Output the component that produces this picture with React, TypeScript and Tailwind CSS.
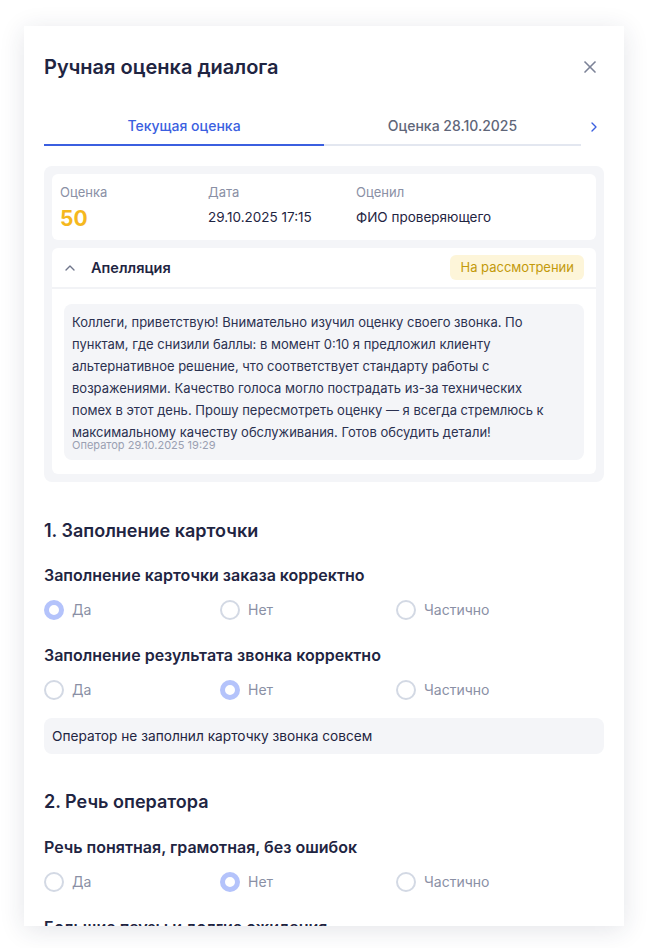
import { X, ChevronRight, ChevronUp } from "lucide-react";

type Opt = "Да" | "Нет" | "Частично";
const OPTS: Opt[] = ["Да", "Нет", "Частично"];

function Radio({ checked, label }: { checked: boolean; label: string }) {
  return (
    <label className="flex items-center gap-2 w-[176px]">
      <span
        className={
          checked
            ? "h-5 w-5 rounded-full border-[5px] border-[#b4c3fb] bg-white"
            : "h-5 w-5 rounded-full border-2 border-[#d3d9e4] bg-white"
        }
      />
      <span className="text-[14px] text-[#8a90a5]">{label}</span>
    </label>
  );
}

function Question({ title, value }: { title: string; value: Opt }) {
  return (
    <div>
      <p className="text-[16px] font-semibold text-[#1f2542] leading-5">{title}</p>
      <div className="flex mt-[14px]">
        {OPTS.map((o) => (
          <Radio key={o} checked={o === value} label={o} />
        ))}
      </div>
    </div>
  );
}

export default function App() {
  return (
    <div className="min-h-screen bg-white pt-[26px] px-6 font-['Inter',sans-serif]">
      <div className="h-[900px] overflow-hidden bg-white shadow-[0_4px_24px_rgba(30,40,70,0.12)] px-5">
        {/* Header */}
        <div className="flex items-center justify-between pt-[29px]">
          <h1 className="text-[20px] font-semibold text-[#1f2542] leading-6">Ручная оценка диалога</h1>
          <button className="text-[#7c8297] mr-1">
            <X className="h-5 w-5" strokeWidth={2} />
          </button>
        </div>

        {/* Tabs */}
        <div className="flex items-center mt-[36px]">
          <div className="flex flex-1">
            <div className="w-[280px] text-center text-[14px] font-medium text-[#3b5fe0] pb-[8px] border-b-2 border-[#3b5fe0]">
              Текущая оценка
            </div>
            <div className="flex-1 text-center text-[14px] font-medium text-[#5f6679] pb-[8px] border-b-2 border-[#e3e7f0]">
              Оценка 28.10.2025
            </div>
          </div>
          <ChevronRight className="h-4 w-4 text-[#3b5fe0] ml-[5px] mb-[8px] mr-[2px]" strokeWidth={2} />
        </div>

        {/* Summary */}
        <div className="mt-5 rounded-lg bg-[#f4f5f8] p-2 flex flex-col gap-2">
          <div className="rounded-md bg-white px-2 pt-[10px] pb-[7px] flex">
            <div className="w-[148px]">
              <p className="text-[13px] text-[#8a90a5] leading-4">Оценка</p>
              <p className="text-[21px] font-bold text-[#f5b81e] leading-7 mt-[5px]">50</p>
            </div>
            <div className="w-[148px]">
              <p className="text-[13px] text-[#8a90a5] leading-4">Дата</p>
              <p className="text-[13.5px] text-[#1f2542] leading-5 mt-[7px]">29.10.2025 17:15</p>
            </div>
            <div>
              <p className="text-[13px] text-[#8a90a5] leading-4">Оценил</p>
              <p className="text-[13.5px] text-[#1f2542] leading-5 mt-[7px]">ФИО проверяющего</p>
            </div>
          </div>

          <div className="rounded-md bg-white">
            <div className="flex items-center justify-between h-[41px] pl-[10px] pr-[12px] border-b-2 border-[#f2f3f6]">
              <div className="flex items-center gap-[13px]">
                <ChevronUp className="h-4 w-4 text-[#6f758b]" strokeWidth={2} />
                <span className="text-[14.5px] font-semibold text-[#1f2542]">Апелляция</span>
              </div>
              <span className="rounded-md bg-[#fdf5d9] px-[10px] py-[3px] text-[13px] text-[#c39a0b]">
                На рассмотрении
              </span>
            </div>
            <div className="px-[12px] pt-[15px] pb-[14px]">
              <div className="rounded-lg bg-[#f4f5f8] px-2 pt-[7px] pb-[8px]">
                <p className="max-w-[482px] text-[13px] leading-[22px] text-[#2b3150]">
                  Коллеги, приветствую! Внимательно изучил оценку своего звонка. По пунктам, где снизили баллы: в
                  момент 0:10 я предложил клиенту альтернативное решение, что соответствует стандарту работы с
                  возражениями. Качество голоса могло пострадать из-за технических помех в этот день. Прошу
                  пересмотреть оценку — я всегда стремлюсь к максимальному качеству обслуживания. Готов обсудить
                  детали!
                </p>
                <p className="text-[11px] text-[#9aa0b2] leading-[14px] mt-[-5px]">Оператор 29.10.2025 19:29</p>
              </div>
            </div>
          </div>
        </div>

        {/* Section 1 */}
        <h2 className="text-[18px] font-semibold text-[#1f2542] mt-[37px] leading-6">1. Заполнение карточки</h2>
        <div className="mt-[22px] flex flex-col gap-[25px]">
          <Question title="Заполнение карточки заказа корректно" value="Да" />
          <Question title="Заполнение результата звонка корректно" value="Нет" />
        </div>
        <div className="mt-[18px] rounded-lg bg-[#f4f5f8] px-2 py-[9px] text-[13.7px] text-[#1f2542] leading-[18px]">
          Оператор не заполнил карточку звонка совсем
        </div>

        {/* Section 2 */}
        <h2 className="text-[18px] font-semibold text-[#1f2542] mt-[36px] leading-6">2. Речь оператора</h2>
        <div className="mt-[23px] flex flex-col gap-[25px]">
          <Question title="Речь понятная, грамотная, без ошибок" value="Нет" />
          <Question title="Большие паузы и долгие ожидания" value="Да" />
        </div>
      </div>
    </div>
  );
}
